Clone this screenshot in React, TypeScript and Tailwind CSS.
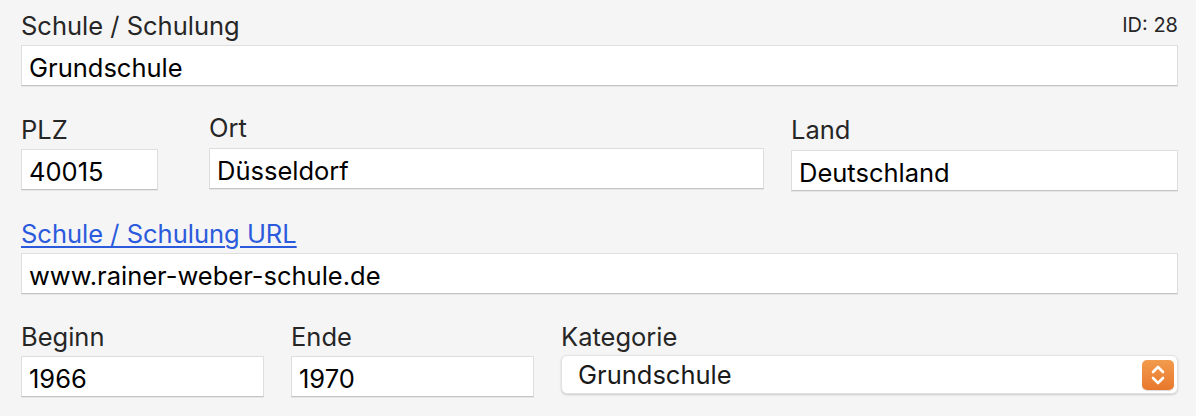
import React from "react"

const font = { fontFamily: "Inter, 'Noto Sans', sans-serif" }

function Field({ value, className = "" }: { value: string; className?: string }) {
    return (
        <div
            className={`h-[41px] bg-white border border-[#dedede] border-b-[#c4c4c4] shadow-[0_1px_0_rgba(0,0,0,0.06)] px-[7px] pt-[4px] leading-[36px] text-[25.5px] text-black whitespace-nowrap overflow-hidden ${className}`}
        >
            {value}
        </div>
    )
}

function Label({ children }: { children: React.ReactNode }) {
    return <div className="text-[25.5px] leading-[30px] text-[#262626] whitespace-nowrap">{children}</div>
}

export default function App() {
    return (
        <div className="w-[1196px] h-[416px] bg-[#f5f5f5] pl-[21px] pr-[18px] pt-[11px] overflow-hidden" style={font}>
            {/* Schule */}
            <div className="flex items-start justify-between">
                <Label>Schule / Schulung</Label>
                <div className="mt-[2px] text-[20px] leading-[24px] text-[#262626]">ID: 28</div>
            </div>
            <Field value="Grundschule" className="mt-[4px]" />

            {/* PLZ / Ort / Land */}
            <div className="flex items-start mt-[27px]">
                <div className="w-[137px] mt-[2px]">
                    <Label>PLZ</Label>
                    <Field value="40015" className="mt-[4px]" />
                </div>
                <div className="w-[555px] ml-[51px]">
                    <Label>Ort</Label>
                    <Field value="Düsseldorf" className="mt-[5px]" />
                </div>
                <div className="flex-1 ml-[27px] mt-[2px]">
                    <Label>Land</Label>
                    <Field value="Deutschland" className="mt-[5px]" />
                </div>
            </div>

            {/* URL */}
            <div className="mt-[28px]">
                <a href="#" className="text-[25.5px] leading-[30px] text-[#2b5bdc] underline underline-offset-[3px] decoration-[1.5px]">
                    Schule / Schulung URL
                </a>
            </div>
            <Field value="www.rainer-weber-schule.de" className="mt-[4px]" />

            {/* Beginn / Ende / Kategorie */}
            <div className="flex items-start mt-[28px]">
                <div className="w-[243px]">
                    <Label>Beginn</Label>
                    <Field value="1966" className="mt-[4px]" />
                </div>
                <div className="w-[243px] ml-[27px]">
                    <Label>Ende</Label>
                    <Field value="1970" className="mt-[4px]" />
                </div>
                <div className="flex-1 ml-[27px]">
                    <Label>Kategorie</Label>
                    <div className="mt-[3px] h-[39px] flex items-center justify-between bg-white rounded-[6px] border border-[#e2e2e2] shadow-[0_1px_2px_rgba(0,0,0,0.18)] pl-[16px] pr-[3px]">
                        <span className="text-[25.5px] text-[#1a1a1a] leading-[30px]">Grundschule</span>
                        <div className="w-[32px] h-[30px] rounded-[5px] bg-gradient-to-b from-[#f29b4c] to-[#e8772b] flex items-center justify-center shadow-[0_1px_1px_rgba(0,0,0,0.15)]">
                            <svg width="16" height="24" viewBox="0 0 16 24" fill="none" stroke="white" strokeWidth="2.6" strokeLinecap="round" strokeLinejoin="round">
                                <path d="M3 9 L8 4 L13 9" />
                                <path d="M3 15 L8 20 L13 15" />
                            </svg>
                        </div>
                    </div>
                </div>
            </div>
        </div>
    )
}
